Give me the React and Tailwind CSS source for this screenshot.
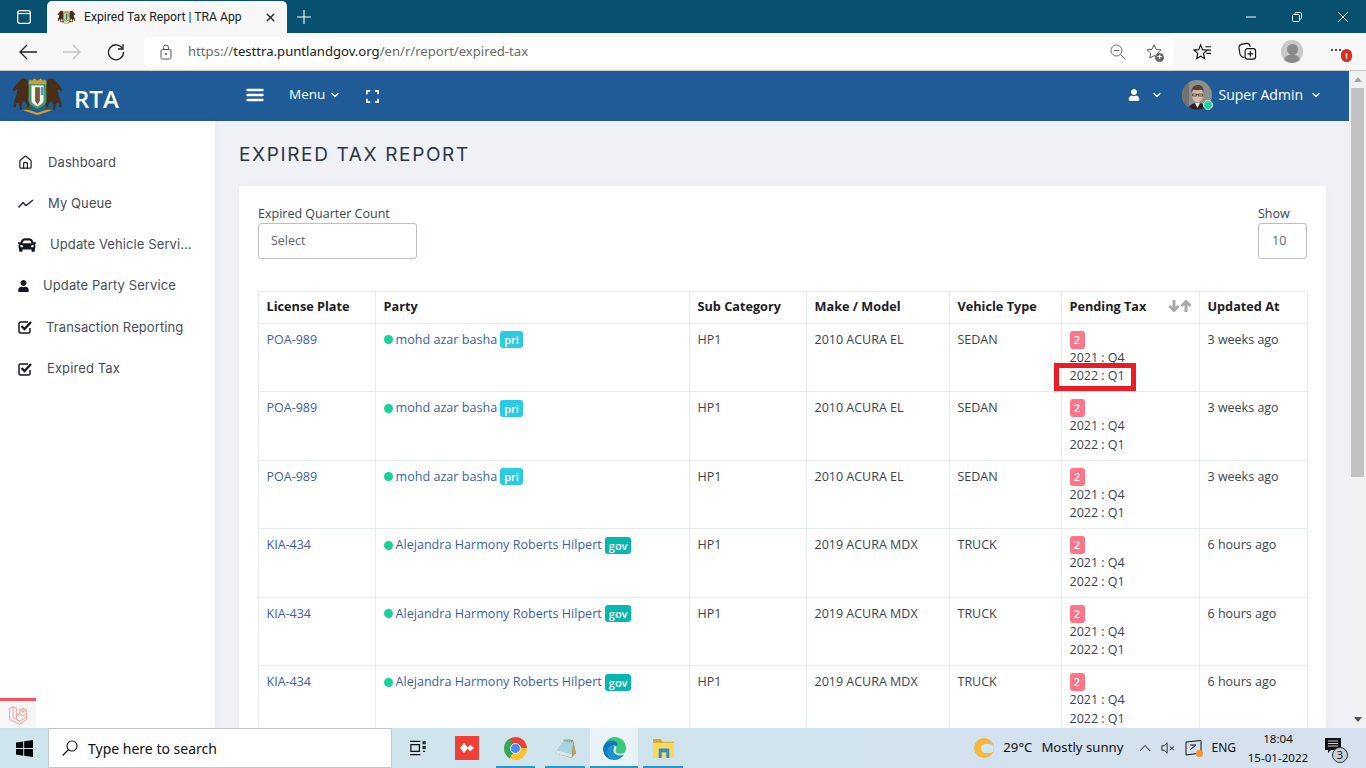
import React from "react";
import { ChevronDown, Home } from "lucide-react";
import { FaCar, FaUser } from "react-icons/fa";

const OS = { fontFamily: '"Open Sans", sans-serif' };
const SEGOE = { fontFamily: '"Noto Sans", "Open Sans", sans-serif' };
const ROBOTO = { fontFamily: 'Roboto, "Noto Sans", sans-serif' };
const MONT = { fontFamily: 'Inter, "Noto Sans", sans-serif' };

function Crest({ className }) {
  return (
    <svg viewBox="0 0 66 50" className={className}>
      <path d="M12 4c3-2 7-1 9 2l1 5 1 10-2 8 2 7-2 6-2-1 1-5-4-5-3 5 1 6H11l-1-8-3-1-1 6H3l1-8 3-8 1-7-4 3-2-2 4-6 4-4z" fill="#4a2f18" />
      <path d="M54 4c-3-2-7-1-9 2l-1 5-1 10 2 8-2 7 2 6 2-1-1-5 4-5 3 5-1 6H55l1-8 3-1 1 6h3l-1-8-3-8-1-7 4 3 2-2-4-6-4-4z" fill="#4a2f18" />
      <path d="M22 7l2-3 2 2 3-3 4 3 4-3 3 3 2-2 2 3v4H22z" fill="#c79f3a" />
      <path d="M22 10h22v20c0 6-6 9-11 11-5-2-11-5-11-11z" fill="#4b9a5f" />
      <path d="M25.500 12h15v18c0 4-4 6-7.500 8-3.500-2-7.500-4-7.500-8z" fill="#f5f6f2" />
      <path d="M30 14h6v17l-3 5-3-5z" fill="#7a5a34" />
      <path d="M37 14h3.500v10h-3.500z" fill="#4a97d6" />
      <path d="M14 42c6 3 12 4 19 7 7-3 13-4 19-7l-4-1c-5 2-10 3-15 5-5-2-10-3-15-5z" fill="#d19a2c" />
      <path d="M16 39h8l2 3H14zM42 39h8l2 3H40z" fill="#3d5a34" />
    </svg>
  );
}

function Avatar({ className }) {
  return (
    <svg viewBox="0 0 30 30" className={className}>
      <defs>
        <clipPath id="av"><circle cx="15" cy="15" r="15" /></clipPath>
      </defs>
      <g clipPath="url(#av)">
        <rect width="30" height="30" fill="#8f8e8b" />
        <rect x="0" y="0" width="7" height="30" fill="#737270" />
        <path d="M6 30c1-5 4-7 9.500-7S24 25 25 30z" fill="#262626" />
        <path d="M13 23l2.500 5 2.500-5z" fill="#eeeae4" />
        <ellipse cx="15.500" cy="15" rx="5.500" ry="7.500" fill="#d8b9a3" />
        <path d="M9.500 13c-.5-6 3-8 6.500-8s6 2.500 5.500 7l-1.500-2.500c-3 1-6 1-9 0z" fill="#51423a" />
        <path d="M10.500 14h4v2h-4zM16.500 14h4v2h-4zM14.500 14.500h2" fill="none" stroke="#2a2a2a" strokeWidth="0.700" />
      </g>
    </svg>
  );
}

function Laravel() {
  return (
    <svg viewBox="0 0 24 24" className="w-[20px] h-[22px]" fill="none" stroke="#f9a09a" strokeWidth="1.200" strokeLinejoin="round">
      <path d="M2 4l4-2 4 2v13l4 2.500 8-4.500V6l-4-2-4 2v4.500L10 13" />
      <path d="M2 4v13.500L14 23l8-5v-3M6 2v13l8 4.500M18 4v5M14 6l4 2.500L22 6M14 10.500l4 2.500 4-2.500" />
    </svg>
  );
}

function CheckBox() {
  return (
    <svg viewBox="0 0 15 14" className="w-[15px] h-[14px]" fill="none" stroke="#141821">
      <path d="M12 8v3.500a1.500 1.500 0 01-1.500 1.500h-8A1.500 1.500 0 011 11.500v-8A1.500 1.500 0 012.500 2H10" strokeWidth="1.500" />
      <path d="M3.500 6l3 3 6.500-7" strokeWidth="2.300" />
    </svg>
  );
}

const sidebar = [
  { label: "Dashboard", gap: "gap-[15px]", icon: <Home size={15} strokeWidth={2} className="text-[#1c2430]" /> },
  {
    label: "My Queue", gap: "gap-[14px]",
    icon: (
      <svg viewBox="0 0 16 10" className="w-[16px] h-[10px]" fill="none" stroke="#1c2430" strokeWidth="1.500">
        <path d="M0.500 8.500L5 3.500l3 3 7-5.500" />
      </svg>
    ),
  },
  { label: "Update Vehicle Servi…", gap: "gap-[14px]", icon: <FaCar size={18} className="text-[#141821]" /> },
  { label: "Update Party Service", gap: "gap-[14px]", icon: <FaUser size={12} className="text-[#141821]" />, extra: "w-[11px]" },
  { label: "Transaction Reporting", gap: "gap-[13px]", icon: <CheckBox /> },
  { label: "Expired Tax", gap: "gap-[14px]", icon: <CheckBox /> },
];

const pri = { plate: "POA-989", name: "mohd azar basha", tag: "pri", tagClass: "bg-[#2bcbe4]", model: "2010 ACURA EL", type: "SEDAN", time: "3 weeks ago" };
const gov = { plate: "KIA-434", name: "Alejandra Harmony Roberts Hilpert", tag: "gov", tagClass: "bg-[#06b6b0]", model: "2019 ACURA MDX", type: "TRUCK", time: "6 hours ago" };
const rows = [pri, pri, pri, gov, gov, gov];

const th = "border border-[#e3ebf3] px-[7.500px] pb-[2px] text-left font-bold text-[12.700px] text-[#1b2027] align-middle";
const td = "border border-[#e3ebf3] px-[7.500px] pt-[7px] pb-[3px] align-top text-[12.500px] leading-[18.500px] text-[#3b4350]";

function Chrome() {
  return (
    <div className="shrink-0" style={SEGOE}>
      <div className="h-[33px] bg-[#07506f] flex items-end text-white">
        <div className="w-[47px] h-full flex items-center justify-center">
          <svg viewBox="0 0 14 14" className="w-[14px] h-[14px]" fill="none" stroke="#fff" strokeWidth="1.300">
            <rect x="0.700" y="0.700" width="12.600" height="12.600" rx="2" />
            <path d="M0.700 3.500h12.600" />
          </svg>
        </div>
        <div className="w-[240px] h-[32px] bg-[#f7f7f7] rounded-t-[5px] flex items-center text-[#222] pl-[10px]">
          <Crest className="w-[19px] h-[18px] shrink-0" />
          <span className="ml-[8px] text-[12.200px] w-[182px] shrink-0 whitespace-nowrap" style={ROBOTO}>Expired Tax Report | TRA App</span>
          <svg viewBox="0 0 10 10" className="w-[9px] h-[9px] shrink-0" stroke="#222" strokeWidth="1.500"><path d="M1 1l8 8M9 1l-8 8" /></svg>
        </div>
        <div className="w-[34px] h-full flex items-center justify-center">
          <svg viewBox="0 0 14 14" className="w-[14px] h-[14px]" stroke="#fff" strokeWidth="1.100"><path d="M7 0v14M0 7h14" /></svg>
        </div>
        <div className="flex-1" />
        <div className="h-full flex items-center pr-[18px] gap-[36px]">
          <svg viewBox="0 0 10 10" className="w-[10px] h-[10px]" stroke="#fff" strokeWidth="1"><path d="M0 5h10" /></svg>
          <svg viewBox="0 0 10 10" className="w-[10px] h-[10px]" fill="none" stroke="#fff" strokeWidth="0.900"><rect x="0.500" y="2.500" width="7" height="7" rx="1" /><path d="M3 2.500V1.500a1 1 0 011-1h4.500a1 1 0 011 1V6a1 1 0 01-1 1h-1" /></svg>
          <svg viewBox="0 0 10 10" className="w-[10px] h-[10px]" stroke="#fff" strokeWidth="1"><path d="M0 0l10 10M10 0L0 10" /></svg>
        </div>
      </div>
      <div className="h-[38px] bg-[#f7f7f7] flex items-center border-b border-[#c9c9c9]">
        <div className="w-[144px] shrink-0 flex items-center pl-[19px] gap-[26px]">
          <svg viewBox="0 0 18 16" className="w-[18px] h-[16px]" fill="none" stroke="#222" strokeWidth="1.300"><path d="M18 8H1M8 1L1 8l7 7" /></svg>
          <svg viewBox="0 0 18 16" className="w-[18px] h-[16px]" fill="none" stroke="#c3c3c3" strokeWidth="1.300"><path d="M0 8h17M10 1l7 7-7 7" /></svg>
          <svg viewBox="0 0 18 18" className="w-[18px] h-[18px]" fill="none" stroke="#222" strokeWidth="1.300"><path d="M15.500 5.500A7.500 7.500 0 1016.500 9M16 1v5h-5" /></svg>
        </div>
        <div className="w-[1030px] h-[30px] bg-white rounded-[5px] flex items-center pl-[16px] pr-[10px]">
          <svg viewBox="0 0 12 16" className="w-[12px] h-[16px]" fill="none" stroke="#555" strokeWidth="1"><rect x="1" y="5.500" width="10" height="9.500" rx="1.500" /><path d="M3.500 5.500V3.500a2.500 2.500 0 015 0v2" /><circle cx="6" cy="10" r="0.700" fill="#555" /></svg>
          <span className="ml-[16px] text-[13.120px] text-[#6a6a6a] whitespace-nowrap">https://<span className="text-[#1a1a1a]">testtra.puntlandgov.org</span>/en/r/report/expired-tax</span>
          <div className="flex-1" />
          <svg viewBox="0 0 16 16" className="w-[16px] h-[16px]" fill="none" stroke="#666" strokeWidth="1"><circle cx="6.500" cy="6.500" r="5.500" /><path d="M10.500 10.500L15.500 15.500M4 6.500h5" /></svg>
          <div className="relative ml-[20px] w-[18px] h-[20px]">
            <svg viewBox="0 0 20 20" className="w-[18px] h-[20px]" fill="none" stroke="#555" strokeWidth="1.100"><path d="M9 2l2.300 5 5.400.6-4 3.700 1.100 5.400L9 14l-4.800 2.700 1.100-5.400-4-3.700L6.700 7z" /></svg>
            <span className="absolute right-0 bottom-0 w-[9px] h-[9px] rounded-full bg-[#666] text-white text-[9px] leading-[8px] text-center font-bold">+</span>
          </div>
        </div>
        <div className="flex-1 flex items-center pl-[19px]">
          <svg viewBox="0 0 20 18" className="w-[19px] h-[18px]" fill="none" stroke="#111" strokeWidth="1.200"><path d="M8 1.500l2 5 5 .5-4 3.500 1.200 5.500L8 13.500 3.800 16 5 10.500 1 7l5-.5zM13 3.500h6M15 7h4M14 10.500h5" /></svg>
          <svg viewBox="0 0 20 20" className="ml-[26px] w-[19px] h-[19px]" fill="none" stroke="#111" strokeWidth="1.200"><rect x="7.500" y="7" width="11" height="11" rx="2.500" /><path d="M13 9.500v6M10 12.500h6M7 16.500c-3-.5-4.500-2-5-4L1 6c-.3-2 1-3 2.500-3.500L9 1.500c2-.2 3 .5 3.500 2.500L13 5" /></svg>
          <div className="ml-[24px] w-[22px] h-[23px] rounded-full bg-[#c9c9c9] relative overflow-hidden">
            <div className="absolute left-[6px] top-[4px] w-[11px] h-[11px] rounded-full bg-[#8a8a8a]" />
            <div className="absolute left-[3px] top-[15px] w-[16px] h-[12px] rounded-full bg-[#8a8a8a]" />
          </div>
          <div className="relative ml-[28px] w-[24px] h-[20px]">
            <div className="absolute left-0 top-[7px] flex gap-[2px]">
              <span className="w-[2px] h-[2px] bg-[#111] rounded-full" />
              <span className="w-[2px] h-[2px] bg-[#111] rounded-full" />
              <span className="w-[2px] h-[2px] bg-[#111] rounded-full" />
            </div>
            <span className="absolute left-[10px] top-[7px] w-[11px] h-[13px] rounded-full bg-[#d92d20] text-white text-[9px] leading-[13px] text-center font-bold">!</span>
          </div>
        </div>
      </div>
    </div>
  );
}

function Header() {
  return (
    <div className="h-[50px] shrink-0 bg-[#1f5b96] flex items-center text-white" style={OS}>
      <div className="w-[246px] shrink-0 flex items-center pl-[11px]">
        <Crest className="w-[53px] h-[42px]" />
        <span className="ml-[10px] text-[24px] font-semibold leading-none mt-[6px]">RTA</span>
      </div>
      <svg viewBox="0 0 18 14" className="w-[18px] h-[14px] mb-[2px]" stroke="#fff" strokeWidth="2.400" strokeLinecap="round"><path d="M1.500 2h15M1.500 7h15M1.500 12h15" /></svg>
      <span className="ml-[25px] text-[13.500px] font-normal mb-[3px]">Menu</span>
      <ChevronDown size={12} strokeWidth={2.500} className="ml-[4px] mb-[2px]" />
      <svg viewBox="0 0 14 14" className="ml-[25px] w-[13px] h-[13px]" fill="none" stroke="#fff" strokeWidth="1.800"><path d="M1 4.500V1h3.500M9.500 1H13v3.500M13 9.500V13H9.500M4.500 13H1V9.500" /></svg>
      <div className="flex-1" />
      <FaUser size={12} className="mb-[3px]" />
      <ChevronDown size={12} strokeWidth={2.500} className="ml-[11px] mb-[2px]" />
      <div className="relative ml-[19px] w-[30px] h-[30px] mb-[2px]">
        <Avatar className="w-[30px] h-[30px]" />
        <span className="absolute -right-[1px] bottom-0 w-[10px] h-[10px] rounded-full bg-[#16d39a] border border-white" />
      </div>
      <span className="ml-[6px] text-[14px] mb-[3px]">Super Admin</span>
      <ChevronDown size={12} strokeWidth={2.500} className="ml-[7px] mr-[27px] mb-[2px]" />
    </div>
  );
}

function Sidebar() {
  return (
    <div className="w-[215px] shrink-0 bg-white flex flex-col relative pt-[21px] shadow-[0_0_6px_rgba(0,0,0,0.05)]" style={MONT}>
      {sidebar.map((s) => (
        <div key={s.label} className={"h-[41.200px] flex items-center pl-[18px] text-[13px] text-[#464e5c] tracking-[0.1px] whitespace-nowrap " + s.gap}>
          <span className={"flex items-center justify-center shrink-0 " + (s.extra || "")}>{s.icon}</span>
          <span>{s.label}</span>
        </div>
      ))}
      <div className="absolute left-0 bottom-0 w-[36px] h-[30px] bg-[#f7f7f7] border-t-[3px] border-t-[#f9545f] flex items-center justify-center">
        <Laravel />
      </div>
    </div>
  );
}

function Table() {
  return (
    <table className="w-[1049px] table-fixed border-collapse" style={OS}>
      <colgroup>
        <col className="w-[117px]" />
        <col className="w-[314px]" />
        <col className="w-[117px]" />
        <col className="w-[143px]" />
        <col className="w-[112px]" />
        <col className="w-[138px]" />
        <col className="w-[108px]" />
      </colgroup>
      <thead>
        <tr className="h-[31.600px]">
          <th className={th}>License Plate</th>
          <th className={th}>Party</th>
          <th className={th}>Sub Category</th>
          <th className={th}>Make / Model</th>
          <th className={th}>Vehicle Type</th>
          <th className={th}>
            <div className="flex items-center justify-between">
              <span>Pending Tax</span>
              <svg viewBox="0 0 24 12" className="w-[24px] h-[12px]" fill="none" stroke="#a9a9a9" strokeWidth="3">
                <path d="M6 0v10M1.500 6l4.500 4.500L10.500 6M18 12V2M13.500 6L18 1.500 22.500 6" />
              </svg>
            </div>
          </th>
          <th className={th}>Updated At</th>
        </tr>
      </thead>
      <tbody>
        {rows.map((r, i) => (
          <tr key={i} className="h-[68.500px]">
            <td className={td}><span className="text-[#3a5fae]">{r.plate}</span></td>
            <td className={td}>
              <div className="flex items-center whitespace-nowrap">
                <span className="w-[9px] h-[9px] rounded-full bg-[#16d39a] mr-[3px] shrink-0" />
                <span className="text-[#3a5fae] text-[12.600px]">{r.name}</span>
                <span className={"ml-[3px] px-[4px] h-[17px] rounded-[3px] text-white text-[11px] font-semibold leading-[17px] " + r.tagClass}>{r.tag}</span>
              </div>
            </td>
            <td className={td}>HP1</td>
            <td className={td}>{r.model}</td>
            <td className={td}>{r.type}</td>
            <td className={td}>
              <div className="w-[15px] h-[18px] rounded-[3px] bg-[#ff7588] text-white text-[11px] leading-[18px] text-center font-semibold">2</div>
              <div className="leading-[18.500px]">2021 : Q4</div>
              <div className="relative leading-[18.500px]">
                2022 : Q1
                {i === 0 && <span className="absolute -left-[16px] -top-[4px] w-[82px] h-[28px] border-[5px] border-[#ed1c24]" />}
              </div>
            </td>
            <td className={td}>{r.time}</td>
          </tr>
        ))}
      </tbody>
    </table>
  );
}

function Main() {
  return (
    <div className="flex-1 min-w-0 bg-[#f0f1f7] overflow-hidden pl-[24px] pr-[24px]">
      <h1 className="h-[65px] flex items-center text-[19px] text-[#2a3547] tracking-[1.650px] pt-[4px] whitespace-nowrap" style={MONT}>EXPIRED TAX REPORT</h1>
      <div className="bg-white w-[1087px] px-[19px] pt-[19px] pb-[20px] rounded-t-[2px] shadow-[0_1px_10px_rgba(0,0,0,0.03)]" style={OS}>
        <div className="flex justify-between h-[86px]">
          <div>
            <div className="text-[12.500px] leading-[18px] text-[#3b4350]">Expired Quarter Count</div>
            <div className="w-[159px] h-[36px] border border-[#babfc7] rounded-[3px] flex items-center pl-[12px] text-[12.500px] text-[#5d6570]">Select</div>
          </div>
          <div>
            <div className="text-[12.500px] leading-[18px] text-[#3b4350]">Show</div>
            <div className="w-[49px] h-[36px] border border-[#babfc7] rounded-[3px] flex items-center pl-[13px] text-[12.500px] text-[#5d6570]">10</div>
          </div>
        </div>
        <Table />
      </div>
    </div>
  );
}

function Scrollbar() {
  return (
    <div className="w-[17px] shrink-0 bg-[#f1f1f1] flex flex-col items-center">
      <div className="h-[17px] flex items-center justify-center">
        <span className="w-0 h-0 border-l-[4px] border-r-[4px] border-b-[5px] border-l-transparent border-r-transparent border-b-[#a3a3a3]" />
      </div>
      <div className="w-[13px] h-[389px] bg-[#c1c1c1]" />
      <div className="flex-1" />
      <div className="h-[17px] flex items-center justify-center">
        <span className="w-0 h-0 border-l-[4px] border-r-[4px] border-t-[5px] border-l-transparent border-r-transparent border-t-[#505050]" />
      </div>
    </div>
  );
}

function Slot({ w, active, children }) {
  return (
    <div className={"h-[40px] relative flex items-center justify-center " + w + (active ? " bg-[#e9f2f7]" : "")}>
      {children}
      <span className={"absolute bottom-0 h-[2px] bg-[#2a95cf] " + (active ? "left-0 right-0" : "left-[5px] right-[5px]")} />
    </div>
  );
}

function Taskbar() {
  return (
    <div className="h-[40px] shrink-0 bg-gradient-to-r from-[#cfe5ee] via-[#cfe3ed] to-[#d6e0ee] flex items-center text-[#111]" style={SEGOE}>
      <div className="w-[48px] flex items-center justify-center">
        <svg viewBox="0 0 16 16" className="w-[17px] h-[17px]" fill="#000"><path d="M0 2.300l6.800-1v6.300H0zM7.700 1.200L16 0v7.600H7.700zM0 8.500h6.800v6.300L0 13.700zM7.700 8.500H16V16l-8.300-1.200z" /></svg>
      </div>
      <div className="w-[344px] h-[40px] bg-white border border-[#c4c9cd] flex items-center pl-[13px]">
        <svg viewBox="0 0 16 16" className="w-[16px] h-[16px]" fill="none" stroke="#111" strokeWidth="1.100"><circle cx="10" cy="6" r="5" /><path d="M6.500 9.500L.7 15.500" /></svg>
        <span className="ml-[10px] text-[14px]">Type here to search</span>
      </div>
      <div className="w-[50px] flex justify-center">
        <svg viewBox="0 0 18 16" className="w-[17px] h-[16px]" fill="none" stroke="#111" strokeWidth="1.300"><path d="M1 1h11M1 15h11M2 4.500h9v7H2zM15 1.500h2v2h-2zM15 6.500h2v2h-2zM15 11.500h2" /></svg>
      </div>
      <div className="ml-[13px] w-[24px] h-[24px] bg-[#ef3f36] flex items-center justify-center">
        <svg viewBox="0 0 14 10" className="w-[14px] h-[10px]" fill="#fff"><path d="M4 0l4 5-4 5-4-5zM10 1.500L14 5l-4 3.500L7.500 5z" /></svg>
      </div>
      <div className="ml-[12px]">
        <Slot w="w-[49px]">
          <div className="w-[23px] h-[23px] rounded-full bg-[conic-gradient(from_330deg,#ea4335_0_33.300%,#fbc02d_33.300%_66.600%,#34a853_66.600%_100%)] flex items-center justify-center">
            <span className="w-[11px] h-[11px] rounded-full bg-[#4a8af4] border-[1.500px] border-[#eef3f5]" />
          </div>
        </Slot>
      </div>
      <Slot w="w-[50px]">
        <svg viewBox="0 0 24 24" className="w-[23px] h-[23px]">
          <path d="M1 17L12 2l8 1 3 14-5 5z" fill="#b69a6a" />
          <path d="M1 17L12 2l8 3-2 16z" fill="#a9d3e0" />
          <path d="M1 17l17 4 1-3L3 14z" fill="#d8e6ea" />
          <path d="M10 3.500l10 2" stroke="#6e8a94" strokeWidth="1.600" strokeDasharray="1 1" />
        </svg>
      </Slot>
      <Slot w="w-[48px]" active>
        <svg viewBox="0 0 26 26" className="w-[25px] h-[25px]">
          <path d="M13 1a12 12 0 0112 12c0 3.500-2.500 5.500-6 5.500-3 0-5-1-5-3 0-1 1-2 1-3 0-3-4-5-8-4-3 1-5 3-6 6C2 7 7 1 13 1z" fill="#37c77f" />
          <path d="M1 13c1-5 4-7 7-8 4-1 8 1 8 4 0 1-1 1-3 1-4 0-7 3-7 7 0 3 2 6 5 8-6-1-10-6-10-12z" fill="#0f78c5" />
          <path d="M10 24c-2-1-4-4-4-7 0-4 3-7 7-7 0 1-1 3-1 5 0 3 3 5 7 5 2 0 3 0 4-1-2 4-6 6-10 6-1 0-2 0-3-1z" fill="#1597cd" />
        </svg>
      </Slot>
      <Slot w="w-[50px]">
        <svg viewBox="0 0 24 22" className="w-[23px] h-[21px]"><path d="M1 1h8l2 3h12v17H1z" fill="#d9a52e" /><rect x="1" y="5" width="22" height="16" fill="#fbd75b" /><rect x="7" y="11" width="11" height="10" fill="#2a8fd6" /><rect x="10" y="15" width="5" height="6" fill="#fbd75b" /></svg>
      </Slot>
      <div className="flex-1" />
      <div className="w-[20px] h-[20px] rounded-full bg-[#f6b73c] relative overflow-hidden">
        <span className="absolute left-[7px] top-[6px] w-[13px] h-[9px] rounded-full bg-[#cfe6f7]" />
      </div>
      <span className="ml-[9px] text-[13.200px] whitespace-nowrap">29°C</span>
      <span className="ml-[9px] text-[13.200px] whitespace-nowrap">Mostly sunny</span>
      <svg viewBox="0 0 14 8" className="ml-[16px] w-[12px] h-[8px]" fill="none" stroke="#111" strokeWidth="1.100"><path d="M1 7.500L7 1l6 6.500" /></svg>
      <svg viewBox="0 0 16 14" className="ml-[10px] w-[14px] h-[14px]" fill="none" stroke="#111" strokeWidth="1"><path d="M1 4.500h2.500L7 1v12L3.500 9.500H1zM10 5l5 4.500M15 5l-5 4.500" /></svg>
      <div className="relative ml-[10px] w-[17px] h-[16px]">
        <svg viewBox="0 0 17 16" className="w-[17px] h-[16px]" fill="none" stroke="#111" strokeWidth="1"><path d="M1 2l15-1.500V13L1 15zM5 5h6M5 10l6-5" /></svg>
        <span className="absolute -right-[1px] -bottom-[1px] w-[7px] h-[7px] rounded-full bg-[#f7921e]" />
      </div>
      <span className="ml-[9px] text-[12px]">ENG</span>
      <div className="ml-[9px] w-[66px] flex flex-col items-center text-[11.600px] leading-[19px]">
        <span>18:04</span>
        <span className="whitespace-nowrap">15-01-2022</span>
      </div>
      <div className="relative ml-[14px] mr-[17px] w-[24px] h-[30px]">
        <svg viewBox="0 0 16 15" className="absolute left-0 top-[5px] w-[16px] h-[15px]"><path d="M0 0h16v12H6l-3 3v-3H0z" fill="#111" /><path d="M3 3h10M3 5.500h10M3 8h10" stroke="#fff" strokeWidth="0.800" /></svg>
        <span className="absolute left-[7px] top-[14px] w-[16px] h-[16px] rounded-full border border-[#333] bg-[#c8d1d8] text-[11px] leading-[14px] text-center">3</span>
      </div>
    </div>
  );
}

export default function App() {
  return (
    <div className="w-[1366px] h-[768px] overflow-hidden flex flex-col bg-white">
      <Chrome />
      <div className="flex-1 min-h-0 flex">
        <div className="flex-1 min-w-0 flex flex-col">
          <Header />
          <div className="flex-1 min-h-0 flex">
            <Sidebar />
            <Main />
          </div>
        </div>
        <Scrollbar />
      </div>
      <Taskbar />
    </div>
  );
}
